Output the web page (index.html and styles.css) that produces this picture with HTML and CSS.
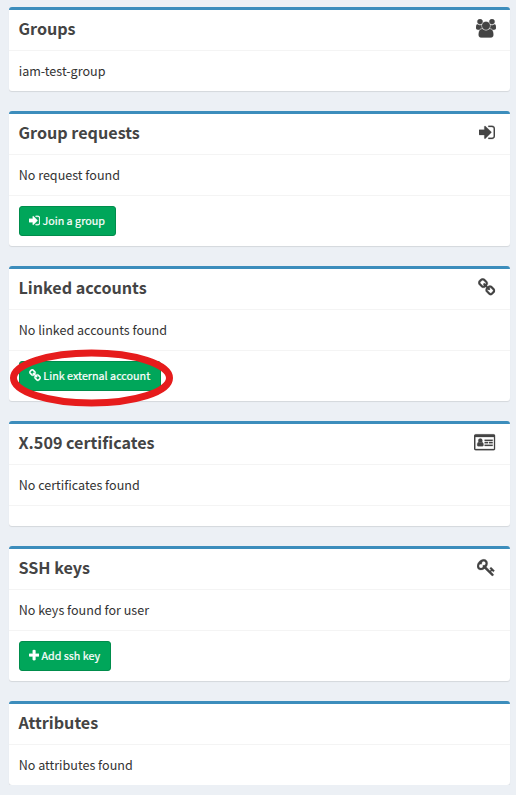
FILE: index.html
```html
<!DOCTYPE html>
<html lang="en">
<head>
<meta charset="utf-8">
<title>Account</title>
<link rel="stylesheet" href="styles.css">
</head>
<body>
<svg class="defs" aria-hidden="true">
  <symbol id="users" viewBox="0 0 1920 1792"><path d="M593 896q-162 5-265 128h-134q-82 0-138-40.500t-56-118.500q0-353 124-353 6 0 43.500 21t97.500 42.500 119 21.500q67 0 133-23-5 37-5 66 0 139 81 256zm1071 637q0 120-73 189.500t-194 69.500h-874q-121 0-194-69.500t-73-189.500q0-53 3.500-103.500t14-109 26.500-108.500 43-97.500 62-81 85.500-53.500 111.500-20q10 0 43 21.500t73 48 107 48 135 21.500 135-21.500 107-48 73-48 43-21.500q61 0 111.500 20t85.500 53.500 62 81 43 97.500 26.500 108.500 14 109 3.500 103.500zm-1024-1277q0 106-75 181t-181 75-181-75-75-181 75-181 181-75 181 75 75 181zm704 384q0 159-112.500 271.500t-271.500 112.500-271.500-112.500-112.500-271.500 112.500-271.500 271.500-112.500 271.500 112.500 112.500 271.500zm576 225q0 78-56 118.500t-138 40.500h-134q-103-123-265-128 81-117 81-256 0-29-5-66 66 23 133 23 59 0 119-21.500t97.500-42.500 43.500-21q124 0 124 353zm-128-609q0 106-75 181t-181 75-181-75-75-181 75-181 181-75 181 75 75 181z"/></symbol>
  <symbol id="signin" viewBox="0 0 1536 1792"><path d="M1184 896q0 26-19 45l-544 544q-19 19-45 19t-45-19-19-45v-288h-448q-26 0-45-19t-19-45v-384q0-26 19-45t45-19h448v-288q0-26 19-45t45-19 45 19l544 544q19 19 19 45zm352-352v704q0 119-84.500 203.500t-203.500 84.500h-320q-13 0-22.500-9.500t-9.500-22.500q0-4-1-20t-.5-26.500 3-23.500 10-19.500 20.500-6.500h320q66 0 113-47t47-113v-704q0-66-47-113t-113-47h-312l-11.500-1-11.500-3-8-5.500-7-9-2-13.500q0-4-1-20t-.5-26.500 3-23.500 10-19.500 20.500-6.500h320q119 0 203.500 84.500t84.500 203.500z"/></symbol>
  <symbol id="chain" viewBox="64 0 1664 1792"><path d="M1520 1216q0-40-28-68l-208-208q-28-28-68-28-42 0-72 32 3 3 19 18.500t21.500 21.500 15 19 13 25.500 3.500 27.500q0 40-28 68t-68 28q-15 0-27.500-3.500t-25.500-13-19-15-21.500-21.500-18.500-19q-33 31-33 73 0 40 28 68l206 207q27 27 68 27 40 0 68-26l147-146q28-28 28-67zm-703-705q0-40-28-68l-206-207q-28-28-68-28-39 0-68 27l-147 146q-28 28-28 67 0 40 28 68l208 208q27 27 68 27 42 0 72-31-3-3-19-18.500t-21.500-21.500-15-19-13-25.500-3.500-27.500q0-40 28-68t68-28q15 0 27.500 3.500t25.500 13 19 15 21.500 21.500 18.500 19q33-31 33-73zm895 705q0 120-85 203l-147 146q-83 83-203 83-121 0-204-85l-206-207q-83-83-83-203 0-123 88-209l-88-88q-86 88-208 88-120 0-204-84l-208-208q-84-84-84-204t85-203l147-146q83-83 203-83 121 0 204 85l206 207q83 83 83 203 0 123-88 209l88 88q86-88 208-88 120 0 204 84l208 208q84 84 84 204z"/></symbol>
  <symbol id="card" viewBox="0 0 2048 1792"><path fill-rule="evenodd" d="M160 128h1728q66 0 113 47t47 113v1216q0 66-47 113t-113 47h-1728q-66 0-113-47t-47-113v-1216q0-66 47-113t113-47zM128 384v1120q0 32 32 32h1728q32 0 32-32v-1120z"/><circle cx="608" cy="736" r="200"/><path d="M430 860q178 160 356 0 130 40 130 265 0 155-110 155h-396q-110 0-110-155 0-225 130-265zM1024 640h768v128h-768zM1024 864h320v128h-320zM1440 864h352v128h-352zM1024 1120h768v128h-768z"/></symbol>
  <symbol id="key" viewBox="0 0 1792 1792"><path d="M832 512q0-80-56-136t-136-56-136 56-56 136q0 42 19 83-41-19-83-19-80 0-136 56t-56 136 56 136 136 56 136-56 56-136q0-42-19-83 41 19 83 19 80 0 136-56t56-136zm851 704q0 17-49 66t-66 49q-9 0-28.500-16t-36.500-33-38.500-40-24.500-26l-96 96 220 220q28 28 28 68 0 42-39 81t-81 39q-40 0-68-28l-671-671q-176 131-365 131-163 0-265.500-102.500t-102.500-265.500q0-160 95-313t248-248 313-95q163 0 265.500 102.500t102.500 265.500q0 189-131 365l355 355 96-96q-3-3-26-24.500t-40-38.500-33-36.500-16-28.500q0-17 49-66t66-49q13 0 23 10 6 6 46 44.500t82 79.500 86.500 86 73 78 28.500 41z"/></symbol>
  <symbol id="plus" viewBox="192 0 1408 1792"><path d="M1600 736v192q0 40-28 68t-68 28h-416v416q0 40-28 68t-68 28h-192q-40 0-68-28t-28-68v-416h-416q-40 0-68-28t-28-68v-192q0-40 28-68t68-28h416v-416q0-40 28-68t68-28h192q40 0 68 28t28 68v416h416q40 0 68 28t28 68z"/></symbol>
</svg>
<main class="boxes">
  <section class="box">
    <header class="box-header"><h3>Groups</h3><svg class="tool w20"><use href="#users"/></svg></header>
    <div class="box-body">iam-test-group</div>
  </section>
  <section class="box">
    <header class="box-header"><h3>Group requests</h3><svg class="tool w16"><use href="#signin"/></svg></header>
    <div class="box-body">No request found</div>
    <footer class="box-footer"><button class="btn join"><svg><use href="#signin"/></svg><span>Join a group</span></button></footer>
  </section>
  <section class="box">
    <header class="box-header"><h3>Linked accounts</h3><svg class="tool w17"><use href="#chain"/></svg></header>
    <div class="box-body">No linked accounts found</div>
    <footer class="box-footer marked"><button class="btn link"><svg><use href="#chain"/></svg><span>Link external account</span></button><svg class="ring" viewBox="0 0 166 60"><ellipse cx="82.500" cy="30" rx="78" ry="25"/></svg></footer>
  </section>
  <section class="box">
    <header class="box-header"><h3>X.509 certificates</h3><svg class="tool w21"><use href="#card"/></svg></header>
    <div class="box-body">No certificates found</div>
    <footer class="box-footer"></footer>
  </section>
  <section class="box">
    <header class="box-header"><h3>SSH keys</h3><svg class="tool w18"><use href="#key"/></svg></header>
    <div class="box-body">No keys found for user</div>
    <footer class="box-footer"><button class="btn add"><svg><use href="#plus"/></svg><span>Add ssh key</span></button></footer>
  </section>
  <section class="box">
    <header class="box-header"><h3>Attributes</h3></header>
    <div class="box-body">No attributes found</div>
  </section>
</main>
</body>
</html>
```
FILE: styles.css
```css
* { box-sizing: border-box; }
body {
  margin: 0;
  background: #ecf0f5;
  color: #333;
  font-family: "Source Sans Pro", "Noto Sans CJK SC", "Noto Sans", sans-serif;
  font-size: 12.550px;
  line-height: 20px;
  overflow: hidden;
}
.defs { position: absolute; width: 0; height: 0; }
.boxes {
  display: flex;
  flex-direction: column;
  gap: 20px;
  padding: 7px 6px 0 9px;
}
.box {
  background: #fff;
  border-top: 3px solid #3c8dbc;
  border-radius: 3px;
  box-shadow: 0 1px 1px rgba(0, 0, 0, .1);
}
.box-header {
  display: flex;
  justify-content: space-between;
  height: 41px;
  padding: 9px 14.500px 0 9.500px;
  border-bottom: 1px solid #f4f4f4;
  color: #444;
}
h3 {
  margin: 0;
  font-size: 16.150px;
  line-height: 18px;
  font-weight: 700;
}
.tool { height: 18.670px; fill: currentColor; stroke: currentColor; stroke-width: 25; overflow: visible; }
.w16 { width: 16px; margin-right: .5px; }
.w17 { width: 17.330px; }
.w18 { width: 18.670px; }
.w20 { width: 20px; }
.w21 { width: 21.330px; }
.box-body { height: 40px; padding: 10px 9.700px; }
.box-footer { border-top: 1px solid #f4f4f4; padding: 10px; }
.btn {
  display: flex;
  align-items: center;
  height: 30px;
  padding: 0 9px;
  border: 1px solid #008d4c;
  border-radius: 3px;
  background: #00a65a;
  color: #fff;
  font: 400 10.750px/18px "Source Sans Pro", "Noto Sans CJK SC", "Noto Sans", sans-serif;
  -webkit-text-stroke: .2px #fff;
  white-space: nowrap;
}
.btn svg { flex: none; height: 13px; fill: currentColor; stroke: currentColor; stroke-width: 40; margin: 0 2.300px 1px 0; }
.join { width: 97px; }
.join svg { width: 11.140px; }
.link { width: 142px; }
.link svg { width: 12.070px; }
.add { width: 92px; }
.add svg { width: 10.210px; }
.marked { position: relative; }
.ring {
  position: absolute;
  left: 0;
  top: -3px;
  width: 166px;
  height: 60px;
  fill: none;
  stroke: #e61c1c;
  stroke-width: 7;
}
```
